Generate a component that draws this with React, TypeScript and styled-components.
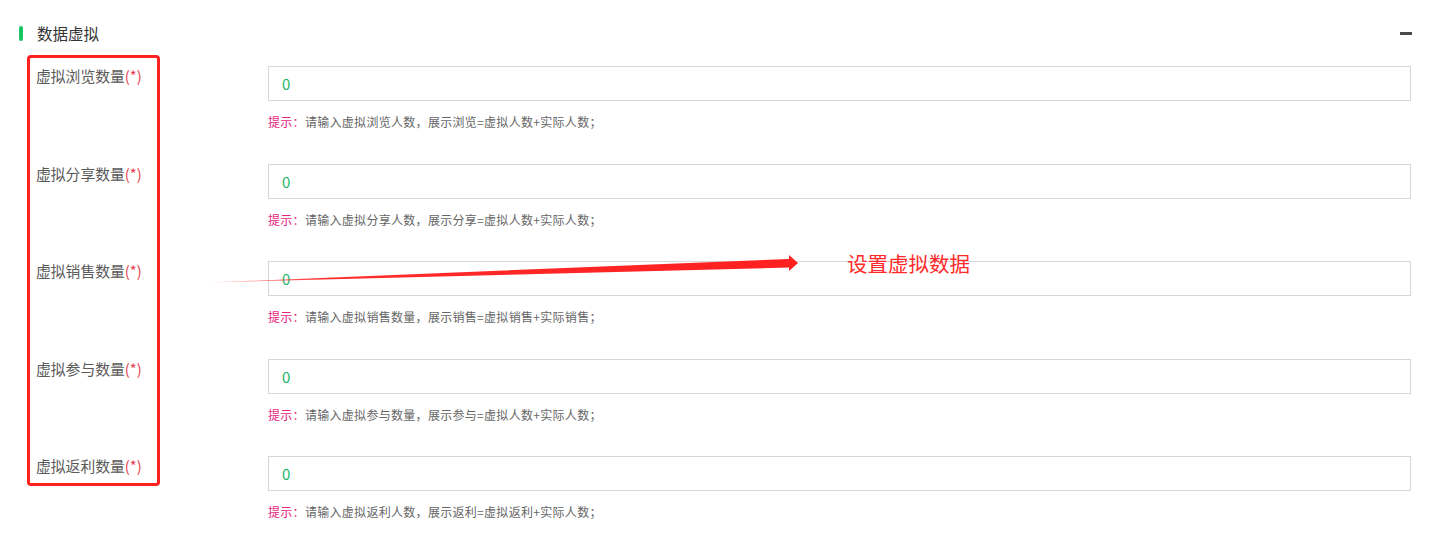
import React from "react";
import styled, { createGlobalStyle } from "styled-components";

const GlobalStyle = createGlobalStyle`
  html, body { margin: 0; padding: 0; background: #fff; }
  body { font-family: "Noto Sans CJK SC", "Noto Sans", sans-serif; }
`;

const Page = styled.div`
  position: relative;
  width: 1442px;
  height: 559px;
  box-sizing: border-box;
  padding: 22px 31px 0 19px;
  overflow: hidden;
`;

const Header = styled.div`
  display: flex;
  align-items: center;
  height: 22px;
`;

const GreenBar = styled.span`
  width: 4px;
  height: 15px;
  border-radius: 2px;
  background: #19c463;
  margin-right: 14px;
`;

const Title = styled.span`
  font-size: 15.5px;
  color: #333;
  line-height: 22px;
`;

const Collapse = styled.span`
  margin-left: auto;
  width: 12px;
  height: 3px;
  background: #4a4a4a;
  margin-right: -1px;
`;

const Form = styled.div`
  display: flex;
  flex-direction: column;
  padding-left: 17px;
  margin-top: 22px;
`;

const Row = styled.div`
  display: grid;
  grid-template-columns: 232px 1fr;
  align-items: start;
  height: 97.5px;
`;

const Label = styled.div`
  font-size: 14.8px;
  line-height: 20px;
  color: #5a5a5a;
  white-space: nowrap;
`;

const Req = styled.span`
  color: #e5404f;
`;

const Field = styled.div`
  display: flex;
  flex-direction: column;
`;

const Input = styled.div`
  box-sizing: border-box;
  height: 35px;
  border: 1px solid #d7d7d7;
  padding-left: 13px;
  display: flex;
  align-items: center;
  font-size: 15px;
  color: #1cb46a;
`;

const Hint = styled.div`
  margin-top: 13px;
  font-size: 12px;
  line-height: 16px;
  letter-spacing: 0.3px;
  color: #666;
`;

const HintKey = styled.span`
  color: #e6247e;
`;

const RedBox = styled.div`
  position: absolute;
  left: 27px;
  top: 55px;
  width: 133px;
  height: 431px;
  box-sizing: border-box;
  border: 3px solid #ff2020;
  border-radius: 4px;
  pointer-events: none;
`;

const Arrow = styled.svg`
  position: absolute;
  left: 0;
  top: 0;
  pointer-events: none;
`;

const Note = styled.div`
  position: absolute;
  left: 847px;
  top: 249px;
  font-size: 20.5px;
  line-height: 28px;
  color: #ff2a2a;
`;

const rows = [
  { label: "虚拟浏览数量", hint: "请输入虚拟浏览人数，展示浏览=虚拟人数+实际人数；" },
  { label: "虚拟分享数量", hint: "请输入虚拟分享人数，展示分享=虚拟人数+实际人数；" },
  { label: "虚拟销售数量", hint: "请输入虚拟销售数量，展示销售=虚拟销售+实际销售；" },
  { label: "虚拟参与数量", hint: "请输入虚拟参与数量，展示参与=虚拟人数+实际人数；" },
  { label: "虚拟返利数量", hint: "请输入虚拟返利人数，展示返利=虚拟返利+实际人数；" },
];

export default function App() {
  return (
    <>
      <GlobalStyle />
      <Page>
        <Header>
          <GreenBar />
          <Title>数据虚拟</Title>
          <Collapse />
        </Header>
        <Form>
          {rows.map((r) => (
            <Row key={r.label}>
              <Label>
                {r.label}
                <Req>(*)</Req>
              </Label>
              <Field>
                <Input>0</Input>
                <Hint>
                  <HintKey>提示：</HintKey>
                  {r.hint}
                </Hint>
              </Field>
            </Row>
          ))}
        </Form>
        <RedBox />
        <Arrow width="1442" height="559" viewBox="0 0 1442 559">
          <defs>
            <linearGradient id="ag" x1="208" y1="282" x2="798" y2="263" gradientUnits="userSpaceOnUse">
              <stop offset="0" stopColor="#ff2020" stopOpacity="0.3" />
              <stop offset="0.2" stopColor="#ff2020" stopOpacity="0.95" />
              <stop offset="1" stopColor="#ff2020" />
            </linearGradient>
          </defs>
          <polygon
            points="208,282.5 789,259 789,255 798,263 789,271 789,267.5"
            fill="url(#ag)"
          />
        </Arrow>
        <Note>设置虚拟数据</Note>
      </Page>
    </>
  );
}
